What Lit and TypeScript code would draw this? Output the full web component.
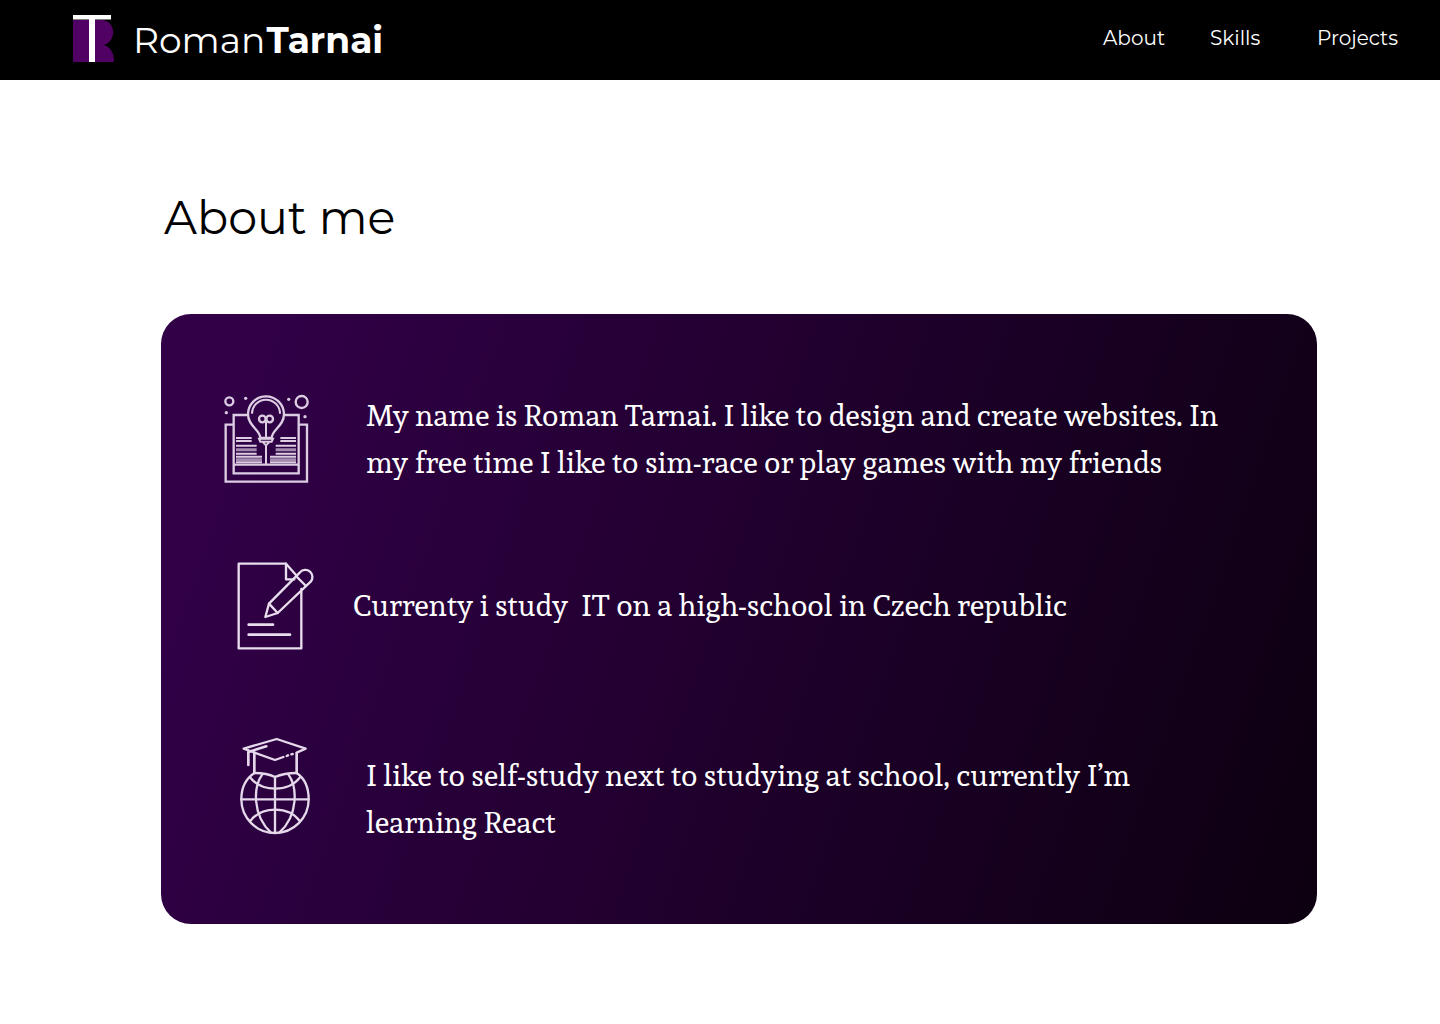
import { LitElement, html, css } from "lit";
import { customElement } from "lit/decorators.js";

const ideaIcon = html`<svg class="icon idea" viewBox="0 0 315 315" aria-hidden="true">
  <g fill="none" stroke="#dccde3" stroke-width="7">
    <circle cx="43" cy="49" r="12"></circle>
    <circle cx="260" cy="51" r="18"></circle>
    <path d="M101 90H56V265H251V90H207"></path>
    <path d="M56 119H32V290H276V119H251"></path>
    <path d="M56 239H251"></path>
    <path d="M136 159C136 134 99 124 99 88A54 54 0 0 1 207 88C207 124 170 134 170 159Z"></path>
    <path d="M111 86A42 42 0 0 1 195 86" stroke-width="6"></path>
    <circle cx="142" cy="102" r="10"></circle>
    <circle cx="164" cy="102" r="10"></circle>
    <path d="M153 110V159M132 161H174L170 170H136ZM144 172L153 181L162 172M153 181V239" stroke-width="6"></path>
  </g>
  <g stroke="#dccde3" stroke-width="6">
    <path d="M63 159H110M63 168H110M63 182H125M63 206H125M63 215H141M63 232H141"></path>
    <path d="M196 159H243M196 168H243M182 182H243M182 206H243M165 215H243M165 232H243"></path>
  </g>
  <g stroke="#a48cb0" stroke-width="9">
    <path d="M63 194H125M63 224H141M182 194H243M165 224H243"></path>
  </g>
  <g fill="#d9c9e1">
    <circle cx="92" cy="40" r="5"></circle><circle cx="34" cy="83" r="5"></circle>
    <circle cx="221" cy="43" r="5"></circle><circle cx="270" cy="95" r="5"></circle>
  </g>
</svg>`;

const noteIcon = html`<svg class="icon note" viewBox="0 0 300 300" aria-hidden="true">
  <g fill="none" stroke="#e9deee" stroke-width="7" stroke-linejoin="round" stroke-linecap="round">
    <path d="M229 102V280H41V26H183L215 62"></path>
    <path d="M183 26V73H208"></path>
    <path d="M132 146L225 52A20 20 0 0 1 257 80L158 174L121 186Z"></path>
    <path d="M132 146L158 174M214 64L243 93"></path>
    <path d="M71 209H144M71 239H195" stroke-width="8"></path>
  </g>
</svg>`;

const globeIcon = html`<svg class="icon globe" viewBox="0 0 270 330" aria-hidden="true">
  <g fill="none" stroke="#e4d8ea" stroke-width="7" stroke-linejoin="round" stroke-linecap="round">
    <path d="M200 68L227 56L140 27L41 56L135 90L160 81M170 78L174 76M184 73L188 72"></path>
    <path d="M109 49L55 66V105M73 68V129M200 70V129" stroke-width="8"></path>
    <path d="M73 129Q111 129 135 141Q162 129 200 129"></path>
    <path d="M73 129C49 145 34 174 34 208A101 101 0 0 0 236 208C236 174 224 145 200 129"></path>
    <path d="M135 141V308M34 208H236"></path>
    <path d="M97 133C70 170 66 255 123 308M175 133C202 170 206 255 148 308"></path>
    <path d="M60 142C95 187 176 187 210 142M60 274C95 227 176 227 210 274"></path>
  </g>
</svg>`;

@customElement("app-root")
export class AppRoot extends LitElement {
  static styles = css`
    :host {
      display: block;
      min-height: 1024px;
      background: #fff;
      font-family: Montserrat, Inter, sans-serif;
      font-weight: 400;
    }
    .bar {
      display: flex;
      align-items: flex-start;
      box-sizing: border-box;
      height: 80px;
      padding-left: 73px;
      padding-right: 42px;
      background: #000;
      color: #fff;
    }
    .mark { width: 41px; height: 47px; margin-top: 15px; }
    .brand {
      display: flex;
      margin-left: 19px;
      margin-top: 18px;
      font-size: 36px;
      line-height: 44px;
      white-space: nowrap;
    }
    .last { font-weight: 700; margin-left: 1px; }
    nav {
      display: flex;
      margin-left: auto;
      margin-top: 26px;
      font-size: 20px;
      line-height: 24px;
      white-space: nowrap;
    }
    nav a { color: #fff; text-decoration: none; }
    .about { width: 107px; }
    .skills { width: 107px; }
    .projects { width: 81px; }
    main { padding: 108px 123px 0 161px; }
    h1 {
      margin: 0 0 66px 3px;
      font-weight: 400;
      font-size: 46px;
      line-height: 60px;
      color: #000;
      white-space: nowrap;
    }
    .card {
      box-sizing: border-box;
      height: 610px;
      border-radius: 30px;
      padding: 71px 0 0 54px;
      background: linear-gradient(109deg, #310047 8%, #0b000e 103%);
      color: #fff;
      font-family: Sura, "DejaVu Serif Condensed", "DejaVu Serif", serif;
      font-weight: 400;
      font-size: 30px;
      line-height: 47px;
    }
    .row { display: flex; align-items: flex-start; }
    .row p { margin: 0; white-space: pre; }
    .line { display: block; }
    .icon { display: block; flex: none; }
    .idea { width: 105px; height: 105px; }
    .note { width: 100px; height: 100px; }
    .globe { width: 90px; height: 110px; }
    .intro p { margin: 7px 0 0 46px; }
    .study { margin: 65px 0 75px 10px; }
    .study p { margin: 27px 0 0 28px; }
    .self { margin-left: 15px; }
    .self p { margin: 22px 0 0 46px; }
  `;

  render() {
    return html`
      <header class="bar">
        <svg class="mark" viewBox="0 0 41 47" aria-hidden="true">
          <path fill="#510063" d="M0 5H29C43 6 44 26 31 30C38 32 41 38 41 47H0Z"></path>
          <path fill="#fff" d="M0 0H38V4.500H22V47H16V4.500H0Z"></path>
        </svg>
        <div class="brand"><span class="first">Roman</span><span class="last">Tarnai</span></div>
        <nav>
          <a class="about">About</a><a class="skills">Skills</a><a class="projects">Projects</a>
        </nav>
      </header>
      <main>
        <h1>About me</h1>
        <section class="card">
          <div class="row intro">
            ${ideaIcon}
            <p><span class="line">My name is Roman Tarnai. I like to design and create websites. In</span><span class="line">my free time I like to sim-race or play games with my friends</span></p>
          </div>
          <div class="row study">
            ${noteIcon}
            <p><span class="line">Currenty i study  IT on a high-school in Czech republic</span></p>
          </div>
          <div class="row self">
            ${globeIcon}
            <p><span class="line">I like to self-study next to studying at school, currently I’m</span><span class="line">learning React</span></p>
          </div>
        </section>
      </main>
    `;
  }
}
